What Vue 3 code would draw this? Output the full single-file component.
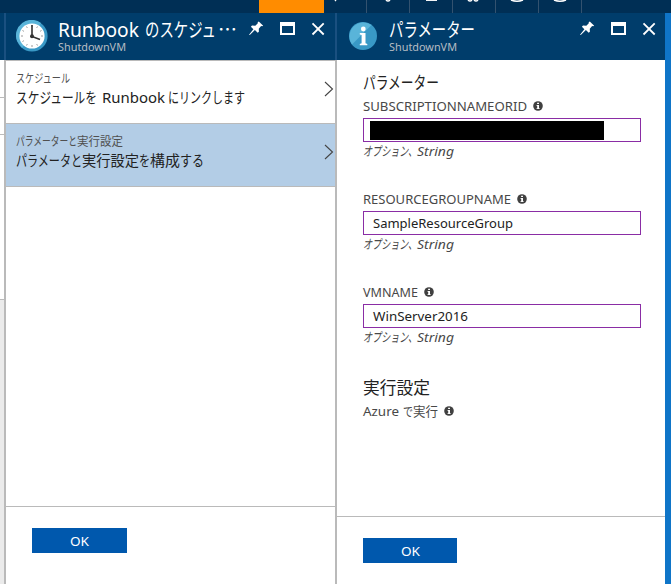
<script setup>
import { h } from 'vue'

// A line of text made of runs: [text, x offset, width]
const FitText = (props) =>
  h('svg', {
    width: props.w, height: props.size + 2,
    style: { display: 'block', overflow: 'visible', flex: 'none' },
    'font-size': props.size, fill: 'currentColor'
  }, props.runs.map(([t, x, len]) =>
    h('text', { x, y: props.size, textLength: len, lengthAdjust: 'spacingAndGlyphs' }, t)))
FitText.props = ['w', 'size', 'runs']

const InfoDot = () =>
  h('svg', { width: 10, height: 10, viewBox: '0 0 10 10', style: { display: 'block', flex: 'none' } }, [
    h('circle', { cx: 5, cy: 5, r: 4.8, fill: '#404040' }),
    h('path', { d: 'M4.1 1.7h1.9v1.4H4.1zM3.6 4h2.4v3.2h.7v.9H3.5v-.9h.7V4.9h-.6z', fill: '#fff' })
  ])

const WindowTools = () =>
  h('svg', { width: 78, height: 18, viewBox: '0 0 78 18', style: { display: 'block', flex: 'none' } }, [
    h('path', { d: 'M9.8 1.4l4.4 4.3-1.1.6-1-.2-2.3 2.7.1 3-1.2 1-2.8-2.8L.8 15l-.6-.1.2-.7 4-4.9-2.5-2.6 1.1-1.1 3.3.1 2.5-2.4-.1-1.1z', fill: '#fff' }),
    h('path', { d: 'M31 2h15v13H31zM33 6v7h11V6z', fill: '#fff', 'fill-rule': 'evenodd' }),
    h('path', { d: 'M63.5 3.3l11.2 11.2M74.7 3.3L63.5 14.5', stroke: '#fff', 'stroke-width': 1.8 })
  ])

const steps = [
  { small: [['スケジュール', 0, 54]], main: [['スケジュールを', 0, 81], ['Runbook', 86, 63], ['にリンクします', 152, 77]] },
  { small: [['パラメーターと', 0, 61], ['実行設定', 61, 46]], main: [['パラメータと', 0, 66], ['実行設定', 66, 57], ['を', 123, 11], ['構成', 134, 30], ['する', 164, 24]], active: true }
]
const fields = [
  { name: 'SUBSCRIPTIONNAMEORID', w: 164, masked: true },
  { name: 'RESOURCEGROUPNAME', w: 148, value: 'SampleResourceGroup', vw: 140 },
  { name: 'VMNAME', w: 55, value: 'WinServer2016', vw: 95 }
]
const tools = ['tip', 'hook', 'screen', 'gear', 'face', 'face']
</script>

<template>
  <div class="portal">
    <div class="topbar">
      <div class="accent"></div>
      <div v-for="(t, i) in tools" :key="i" class="tool" :class="{ first: i === 0 }">
        <svg width="16" height="4" viewBox="0 0 16 4" fill="none" stroke="#fff" stroke-width="1.5">
          <path v-if="t === 'tip'" d="M3 0l-1 1" />
          <path v-if="t === 'hook'" d="M6 0q2 2 4 0" />
          <path v-if="t === 'screen'" d="M3 .2h11" />
          <path v-if="t === 'gear'" d="M2 0q2 2 4 0M8 0q2 2 4 0" />
          <path v-if="t === 'face'" d="M2 0q6 2.5 12 0" />
        </svg>
      </div>
    </div>
    <div class="workspace">
      <div class="gutter"><i class="g1"></i><i class="g2"></i><i class="g3"></i><i class="g4"></i></div>
      <section class="blade left">
        <header>
          <svg class="logo" width="32" height="32" viewBox="0 0 32 32">
            <circle cx="16" cy="16" r="15.6" fill="#3999c6" />
            <path d="M1 21A15.6 15.6 0 0 1 25 3L6 28z" fill="#59b4d9" />
            <circle cx="16" cy="16" r="12.6" fill="#fff" />
            <path d="M16 5v2M16 25v2M5 16h2M25 16h2M10.5 6.5l.8 1.4M21.5 6.5l-.8 1.4M6.5 10.5l1.4.8M25.5 10.5l-1.4.8M6.5 21.5l1.4-.8M10.5 25.5l.8-1.4M21.5 25.5l-.8-1.4" stroke="#999" />
            <path d="M16 5v11.5l8 3" fill="none" stroke="#333" stroke-width="1.6" />
            <circle cx="16" cy="16.3" r="2" fill="#333" />
          </svg>
          <div class="heading">
            <FitText :w="180" :size="19" :runs="[['Runbook', 0, 81], ['のスケジュ', 87, 71], ['⋯', 160, 19]]" />
            <div class="sub"><FitText :w="68" :size="11" :runs="[['ShutdownVM', 0, 68]]" /></div>
          </div>
          <WindowTools class="window-tools" />
        </header>
        <div v-for="(s, i) in steps" :key="i" class="step" :class="{ active: s.active }">
          <div>
            <div class="small"><FitText :w="110" :size="12" :runs="s.small" /></div>
            <FitText :w="230" :size="15" :runs="s.main" />
          </div>
          <svg width="10" height="16" viewBox="0 0 10 16" fill="none" stroke="#444" stroke-width="1.1"><path d="M1 1l7.5 7L1 15" /></svg>
        </div>
        <footer><button><FitText :w="19" :size="13" :runs="[['OK', 0, 19]]" /></button></footer>
      </section>
      <section class="blade right">
        <header>
          <svg class="logo" width="28" height="28" viewBox="0 0 28 28">
            <circle cx="14" cy="14" r="14" fill="#3999c6" />
            <path d="M3 22.5A14 14 0 0 1 22.5 3z" fill="#59b4d9" />
            <circle cx="14.3" cy="7" r="2.4" fill="#fff" />
            <path d="M10.8 11h5.7v10.2l1.8.7v1.3h-7.5v-1.3l1.8-.7v-8.3l-1.8-.5z" fill="#fff" />
          </svg>
          <div class="heading">
            <FitText :w="88" :size="19" :runs="[['パラメーター', 0, 86]]" />
            <div class="sub"><FitText :w="68" :size="11" :runs="[['ShutdownVM', 0, 68]]" /></div>
          </div>
          <WindowTools class="window-tools" />
        </header>
        <div class="content">
          <div class="section-title"><FitText :w="78" :size="17" :runs="[['パラメーター', 0, 76]]" /></div>
          <div v-for="f in fields" :key="f.name" class="field">
            <div class="label"><FitText :w="f.w" :size="13" :runs="[[f.name, 0, f.w]]" /><InfoDot /></div>
            <div class="input" :class="{ masked: f.masked }">
              <div v-if="f.masked" class="mask"></div>
              <FitText v-else :w="f.vw" :size="13" :runs="[[f.value, 0, f.vw]]" />
            </div>
            <div class="hint"><FitText :w="92" :size="13" :runs="[['オプション、', 0, 54], ['String', 54, 37]]" /></div>
          </div>
          <div class="run-title"><FitText :w="68" :size="17" :runs="[['実行設定', 0, 67]]" /></div>
          <div class="label"><FitText :w="75" :size="13" :runs="[['Azure', 0, 36], ['で', 40, 10], ['実行', 50, 25]]" /><InfoDot /></div>
        </div>
        <footer><button><FitText :w="19" :size="13" :runs="[['OK', 0, 19]]" /></button></footer>
      </section>
      <div class="edge"></div>
    </div>
  </div>
</template>

<style>
body { margin: 0; overflow: hidden; }
</style>

<style scoped>
* { box-sizing: border-box; }
.portal { width: 671px; height: 584px; display: flex; flex-direction: column; font-family: "Noto Sans", "Noto Sans CJK JP", sans-serif; color: #222; overflow: hidden; }
.topbar { height: 13px; flex: none; background: #002f55; display: flex; padding-left: 259px; }
.accent { width: 65px; background: #ff8c00; }
.tool { width: 43px; border-right: 1px solid #33526f; display: flex; justify-content: center; }
.tool svg { display: block; }
.tool.first { justify-content: flex-start; padding-left: 9px; }
.workspace { flex: 1; display: flex; min-height: 0; }
.gutter { width: 4px; display: flex; flex-direction: column; background: #fff; }
.gutter i { flex: none; border-bottom: 1px solid #bbb; }
.gutter .g1 { height: 85px; background: linear-gradient(#003d6b 47px, #fff 47px); }
.g2 { height: 37px; }
.g3 { height: 165px; }
.gutter .g4 { flex: 1; background: #ebebeb; border: 0; }
.blade { display: flex; flex-direction: column; padding-left: 2px; background: linear-gradient(#1a5080 47px, #bababa 47px) 0 0 / 2px 100% no-repeat, #fff; }
.left { width: 331px; }
.right { width: 330px; }
header { height: 47px; flex: none; background: #003d6b; color: #fff; display: flex; }
.left header { height: 48px; border-bottom: 1px solid #bababa; }
.left .logo { margin: 7px 10px 0; }
.right .logo { margin: 9px 12px 0; }
.heading { padding-top: 5px; flex: 1; min-width: 0; }
.sub { color: #b5bcc3; margin-top: 1px; }
.window-tools { margin: 7px 8px 0 0; }
.right .window-tools { margin-right: 7px; }
.step { height: 63px; border-bottom: 1px solid #bababa; padding: 10px 1px 0 10px; display: flex; justify-content: space-between; }
.step > svg { margin-top: 10px; }
.step.active { background: #b3cde6; }
.small { color: #505050; margin-bottom: 3px; }
footer { margin-top: auto; border-top: 1px solid #bababa; flex: none; }
.left footer { height: 78px; padding: 21px 0 0 26px; }
.right footer { height: 68px; padding: 21px 0 0 26px; }
button { border: 0; padding: 0 0 1px; width: 95px; height: 25px; background: #0058ad; color: #fff; display: flex; align-items: center; justify-content: center; font-family: inherit; }
.right button { width: 94px; }
.content { padding: 12px 0 0 26px; }
.section-title { height: 26px; }
.field { height: 93px; }
.label { height: 20px; display: flex; gap: 6px; color: #484848; align-items: flex-start; }
.label > :last-child { margin-top: 3px; }
.input { width: 278px; height: 24px; border: 1px solid #8a2da5; padding: 3px 9px; }
.input.masked { padding: 2px 6px; }
.mask { width: 234px; height: 19px; background: #000; }
.hint { font-style: italic; color: #484848; padding-top: 1px; }
.run-title { height: 26px; }
.edge { width: 6px; background: #0f75c8; }
</style>
